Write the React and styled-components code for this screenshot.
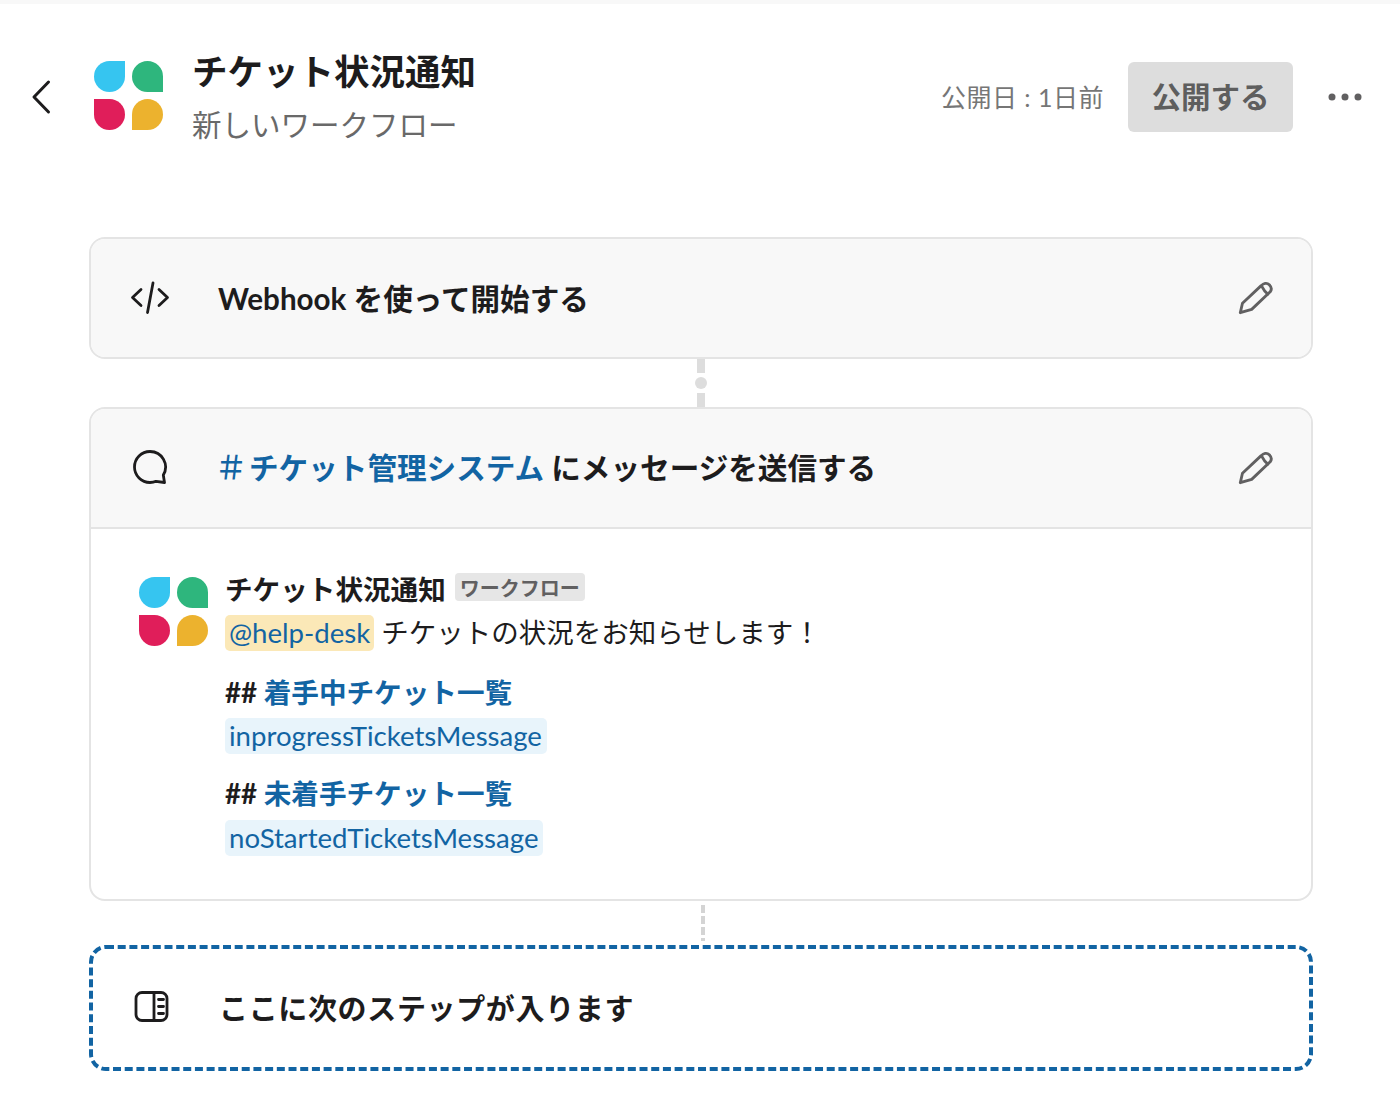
import React from 'react';
import styled, { createGlobalStyle } from 'styled-components';

const Global = createGlobalStyle`
  html, body { margin: 0; padding: 0; background: #fff; }
  body { font-family: Lato, "Noto Sans CJK JP", sans-serif; color: #1d1c1d; }
`;
const Page = styled.div`
  width: 1400px; height: 1103px; box-sizing: border-box; overflow: hidden;
  border-top: 4px solid #f8f8f8; display: flex; flex-direction: column;
`;
const Header = styled.header`
  display: flex; align-items: center; height: 186px; box-sizing: border-box;
  padding: 0 38px 0 30px; flex: none;
`;
const BackButton = styled.button`
  border: 0; background: none; padding: 0; width: 24px; height: 38px; display: flex; color: #1d1c1d;
  margin-right: 40px;
`;
const LogoWrap = styled.div`display: flex; margin-top: ${p => p.$mt}px; flex: none;`;
const Titles = styled.div`
  display: flex; flex-direction: column; margin-left: 29px; flex: 1;
`;
const Title = styled.h1`
  margin: 1px 0 0; font-size: 35.5px; line-height: 48px; font-weight: 700; color: #1d1c1d;
`;
const Subtitle = styled.div`
  font-size: 29.5px; line-height: 44px; margin-top: 7px; color: #696969;
`;
const PublishedAt = styled.span`
  font-size: 25px; color: #767676; margin-right: 24px; letter-spacing: 0.5px; margin-top: -2px;
`;
const PublishButton = styled.button`
  width: 165px; height: 70px; border: 0; border-radius: 6px; background: #dddddd; color: #5e5e5e;
  font: 700 29.5px Lato, "Noto Sans CJK JP", sans-serif; margin-right: 35px; padding: 0 0 4px; margin-top: -1px;
`;
const MoreButton = styled.button`
  border: 0; background: none; padding: 0; width: 34px; height: 10px; display: flex;
`;
const Flow = styled.main`
  display: flex; flex-direction: column; align-items: stretch; padding: 0 87px 0 89px;
  margin-top: 47px;
`;
const Card = styled.section`
  border: 2px solid #e4e4e4; border-radius: 16px; overflow: hidden; background: #fff; box-sizing: border-box;
`;
const StepHead = styled.div`
  height: 118px; background: #f8f8f8; display: flex; align-items: center; padding: 0 37px 0 39px;
  border-bottom: ${p => (p.$divided ? '2px solid #e4e4e4' : '0')};
  box-sizing: content-box;
`;
const IconSlot = styled.span`
  width: 40px; height: 40px; display: flex; align-items: center; justify-content: center; flex: none; color: #1d1c1d;
`;
const StepTitle = styled.div`
  margin-left: ${p => p.$ml}px; margin-top: ${p => p.$mt}px; flex: 1; font-size: 29.6px; font-weight: 700; line-height: 40px; color: #1d1c1d;
`;
const Channel = styled.span`color: #1264a3;`;
const HashMark = styled.span`
  font-weight: 500; font-size: 32px; line-height: 1; margin-right: 2px; margin-left: -2px; color: #1264a3;
  font-family: "Noto Sans CJK JP", sans-serif;
`;
const EditIcon = styled.svg`width: 38px; height: 38px; flex: none; color: #616061;`;
const Connector = styled.div`
  height: 48px; display: flex; flex-direction: column; align-items: center; justify-content: space-between;
`;
const ConnectorLine = styled.span`width: 8px; height: 14px; background: #dddddd;`;
const ConnectorDot = styled.span`width: 12px; height: 12px; border-radius: 50%; background: #dddddd;`;
const MessageBody = styled.div`
  display: flex; padding: 40px 40px 30px 48px; gap: 17px; height: 370px; box-sizing: border-box;
`;
const MessageContent = styled.div`display: flex; flex-direction: column; align-items: flex-start;`;
const SenderRow = styled.div`display: flex; align-items: center; height: 38px; gap: 9px;`;
const SenderName = styled.span`font-size: 27.6px; font-weight: 700; color: #1d1c1d;`;
const Badge = styled.span`
  background: #e6e6e6; color: #616061; font-size: 20px; font-weight: 700; border-radius: 4px; height: 28px;
  padding: 0 5px; display: flex; align-items: center; margin-top: -2px;
`;
const MessageLine = styled.div`
  font-size: 27.5px; line-height: 38px; margin-top: 7px; color: #1d1c1d; display: flex; align-items: center; gap: 7px;
`;
const Mention = styled.span`
  background: #fbe8b7; color: #1264a3; border-radius: 5px; height: 36px; display: inline-flex; align-items: center; padding: 0 4px; font-size: 27.6px;
`;
const Heading = styled.div`
  font-size: 27.6px; font-weight: 700; line-height: 38px; margin-top: ${p => p.$mt}px; color: #1d1c1d;
`;
const Variable = styled.span`
  background: #e8f4fb; color: #1264a3; border-radius: 5px; height: 36px; box-sizing: border-box; display: inline-flex; align-items: center;
  padding: 0 5px 2px 4px; font-size: 27.6px; margin-top: ${p => p.$mt}px;
`;
const ConnectorDashed = styled.div`
  height: 44px; display: flex; justify-content: center; align-items: flex-start; padding-top: 4px; box-sizing: border-box;
  transform: translateX(2px);
`;
const DashedLine = styled.span`
  width: 4px; height: 36px; background: repeating-linear-gradient(to bottom, #d4d4d4 0 8px, transparent 8px 11px);
`;
const Placeholder = styled.section`
  height: 126px; box-sizing: border-box; border-radius: 16px; display: flex; align-items: center; padding: 0 40px 2px 42px; position: relative;
`;
const DashFrame = styled.svg`position: absolute; inset: 0; width: 100%; height: 100%; pointer-events: none;`;
const PlaceholderTitle = styled.div`
  margin-left: 48px; font-size: 29px; font-weight: 700; color: #1d1c1d; letter-spacing: 0.65px;
`;

const Logo = () => (
  <svg width="69" height="69" viewBox="0 0 69 69">
    <path d="M31 0H15.500A15.500 15.500 0 1 0 31 15.500z" fill="#36c5f0" />
    <path d="M53.500 0A15.500 15.500 0 0 1 69 15.500V31H53.500A15.500 15.500 0 0 1 53.500 0z" fill="#2eb67d" />
    <path d="M0 38H15.500A15.500 15.500 0 0 1 15.500 69A15.500 15.500 0 0 1 0 53.500z" fill="#e01e5a" />
    <path d="M38 69V53.500A15.500 15.500 0 1 1 53.500 69z" fill="#ecb22e" />
  </svg>
);

const Pencil = () => (
  <EditIcon viewBox="-1 -1 40 40" fill="none" stroke="currentColor" strokeWidth="3" strokeLinejoin="round" strokeLinecap="round">
    <path d="M3.500 34.500L5.800 24.500 25.500 6C28 3.500 31.500 2.500 34 5S36.500 10.500 35 12.500L15.500 31z" />
    <path d="M26 6.500c1.500 3 3.500 6 6.500 8.500" />
  </EditIcon>
);

export default function App() {
  return (
    <Page>
      <Global />
      <Header>
        <BackButton aria-label="戻る">
          <svg width="24" height="38" viewBox="0 0 24 38" fill="none" stroke="currentColor" strokeWidth="3" strokeLinecap="round" strokeLinejoin="round">
            <path d="M18.500 4L4 19l14.500 15" />
          </svg>
        </BackButton>
        <LogoWrap $mt={-4}><Logo /></LogoWrap>
        <Titles>
          <Title>チケット状況通知</Title>
          <Subtitle>新しいワークフロー</Subtitle>
        </Titles>
        <PublishedAt>公開日 : 1日前</PublishedAt>
        <PublishButton>公開する</PublishButton>
        <MoreButton aria-label="その他">
          <svg width="34" height="10" viewBox="0 0 34 10" fill="#616061">
            <circle cx="4" cy="5" r="3.500" /><circle cx="17" cy="5" r="3.500" /><circle cx="30" cy="5" r="3.500" />
          </svg>
        </MoreButton>
      </Header>
      <Flow>
        <Card>
          <StepHead>
            <IconSlot>
              <svg width="40" height="40" viewBox="0 0 40 40" fill="none" stroke="currentColor" strokeWidth="2.800" strokeLinecap="round" strokeLinejoin="round">
                <path d="M11 11.500L2.500 19.500l8.500 8" /><path d="M29 11.500l8.500 8-8.500 8" /><path d="M23 5l-5.500 29.500" />
              </svg>
            </IconSlot>
            <StepTitle $ml={48} $mt={1}>Webhook を使って開始する</StepTitle>
            <Pencil />
          </StepHead>
        </Card>
        <Connector><ConnectorLine /><ConnectorDot /><ConnectorLine /></Connector>
        <Card>
          <StepHead $divided>
            <IconSlot>
              <svg width="40" height="40" viewBox="0 0 40 40" fill="none" stroke="currentColor" strokeWidth="2.800" strokeLinejoin="round">
                <path d="M20 3.500a15.500 15.500 0 1 0 0 31c2.500 0 4.500-.5 6-1.200l8.500 1.200-1.200-7.500A15.500 15.500 0 0 0 20 3.500z" />
              </svg>
            </IconSlot>
            <StepTitle $ml={47} $mt={0}><HashMark>＃</HashMark><Channel>チケット管理システム</Channel> にメッセージを送信する</StepTitle>
            <Pencil />
          </StepHead>
          <MessageBody>
            <LogoWrap $mt={8}><Logo /></LogoWrap>
            <MessageContent>
              <SenderRow><SenderName>チケット状況通知</SenderName><Badge>ワークフロー</Badge></SenderRow>
              <MessageLine><Mention>@help-desk</Mention> チケットの状況をお知らせします！</MessageLine>
              <Heading $mt={22}>## <Channel>着手中チケット一覧</Channel></Heading>
              <Variable $mt={6}>inprogressTicketsMessage</Variable>
              <Heading $mt={21}>## <Channel>未着手チケット一覧</Channel></Heading>
              <Variable $mt={7}>noStartedTicketsMessage</Variable>
            </MessageContent>
          </MessageBody>
        </Card>
        <ConnectorDashed><DashedLine /></ConnectorDashed>
        <Placeholder>
          <DashFrame viewBox="0 0 1224 126" preserveAspectRatio="none">
            <rect x="2" y="2" width="1220" height="122" rx="15" fill="none" stroke="#1264a3" strokeWidth="4" strokeDasharray="8 3.700" />
          </DashFrame>
          <IconSlot>
            <svg width="40" height="40" viewBox="0 0 40 40" fill="none" stroke="currentColor" strokeWidth="2.800" strokeLinecap="round" strokeLinejoin="round">
              <rect x="5" y="5.500" width="31" height="28" rx="6" /><path d="M23 5.500v28" />
              <path d="M27.500 12.500h5M27.500 19.500h5M27.500 26.500h5" />
            </svg>
          </IconSlot>
          <PlaceholderTitle>ここに次のステップが入ります</PlaceholderTitle>
        </Placeholder>
      </Flow>
    </Page>
  );
}
